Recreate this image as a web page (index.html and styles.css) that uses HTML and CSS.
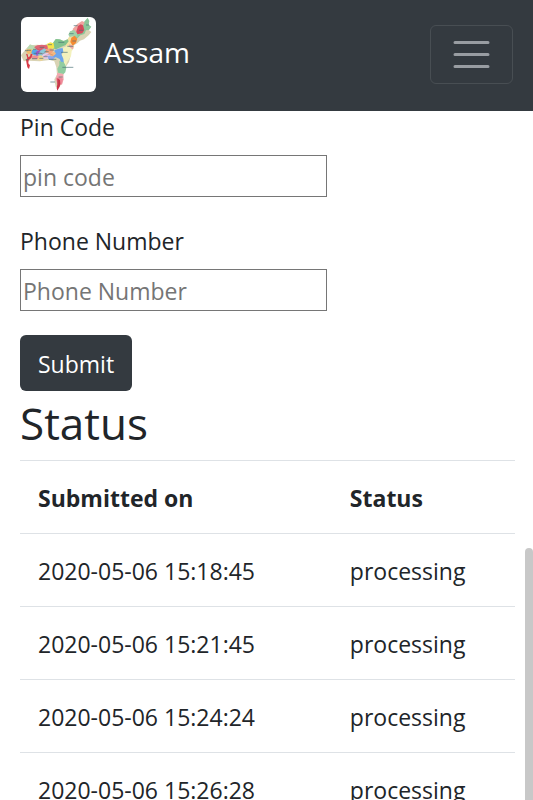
FILE: index.html
```html
<!DOCTYPE html>
<html lang="en">
<head>
<meta charset="utf-8">
<meta name="viewport" content="width=device-width, initial-scale=1">
<title>Assam</title>
<link rel="stylesheet" href="styles.css">
</head>
<body>
<header class="navbar">
  <a class="brand" href="#">
    <svg class="logo" viewBox="33 27 225 225" aria-hidden="true">
      <rect x="33" y="27" width="225" height="225" fill="#fff"/>
      <path fill="#d9d3b4" d="M48 122l12-10 22-2 18 2 12-5 18 1 10-14 24 5 12-8 10-22 8-9 18-6 20-14 6 12-2 14 8 6-8 10-14 12-12 4-8 8-8 4-14 14-3 12 4 10-4 16-12 18-6 24-2 22-12 14-8-4-4-22 8-14-2-22-6-18-14-4-30 4-32-2-16 2-8-18z"/>
      <path fill="#8cc79a" d="M233 29l5 10-2 11 8 6-7 10-9 1-5 11-12 4-8 8-10 4-3-8 17-16 8-20 10-12z"/>
      <path fill="#efa6a0" d="M190 61l12-13 14-9 8 4-6 13-11 20-12-2-8-6z"/>
      <path fill="#d94a5c" d="M204 54l8-5 7 3 4 14-6 10-15 3-4-5z"/>
      <path fill="#9fd0a8" d="M180 70l12-4 9 9 2 13-9-3-14 3-5-8z"/>
      <path fill="#f5e1a0" d="M176 88l12-3-2 25 7 5-7 13-10-5-12 4 4-16z"/>
      <path fill="#f58a32" d="M184 89l10-6 8 9-4 13-10 8-7-11z"/>
      <path fill="#efaaa5" d="M178 109l10 3 3 9-8 5-8-7z"/>
      <path fill="#f3f1bd" d="M154 121l20-8 12 10-3 22-12 18-6 16-9-9-5-22 7-12z"/>
      <path fill="#81c28e" d="M128 106l9-13 13 1 10 5 13-5 3 6-9 11-16 7-13 6-12-4z"/>
      <path fill="#f6e449" d="M111 108l10-5 10 3 2 14-14 4-9-7z"/>
      <path fill="#df6474" d="M82 112l13-2 17 2 2 10-13 4-9 4-14-5-6-8z"/>
      <path fill="#b8d9b1" d="M52 119l8-10 12 5 6 9-7 6-9 5-12 1z"/>
      <path fill="#f3bc6c" d="M46 126l13-4 10 4 1 9-17 3z"/>
      <path fill="#57a8e8" d="M66 127l13-3 5 5-4 14-9-2-7-5z"/>
      <path fill="#9a58cc" d="M81 128l16-2 4 8-8 9-13 1-4-8z"/>
      <path fill="#8bc8d8" d="M91 128l12-7 8 6-6 13-12 6-10-5z"/>
      <path fill="#f6a37d" d="M109 123l14-2 8 5-6 12-13 1-6-8z"/>
      <path fill="#e7c9e8" d="M100 138l13-4 8 8-8 11-13-1-5-7z"/>
      <path fill="#f4d38a" d="M82 143l12-1 7 7-5 9-12-2-5-6z"/>
      <path fill="#ef8f92" d="M63 145l11-3 12 4-3 7-15 1z"/>
      <path fill="#8fa9ea" d="M113 144l15-3 8 7-9 9-12-3z"/>
      <path fill="#6ca5ec" d="M133 127l12-5 13-2 2 11-6 7 6 14 2 15-8-1-5-13-11-5-10-1 7-9z"/>
      <path fill="#f4b67c" d="M121 136l13-5 4 6-9 8-8-1z"/>
      <path fill="#91cca0" d="M148 158l7 4 5-1 5 8 4 10-3 14-5 5-16-3-3-13 6-11z"/>
      <path fill="#f2a8af" d="M142 195l18 3 1 16-5 16-13-1-6-14z"/>
      <path fill="#ef8999" d="M138 210l13-2 8 5-4 15-11 2z"/>
      <path fill="#cc3548" d="M142 211l8 5 1 12-2 8-7 12-2-8 2-11z"/>
      <path fill="#d93c48" d="M48 137l5 2 2 9 5-3 2-8 6 1-4 12-8 7-1 9 5 6-3 11-5-5-2-11-2-11 4-6z"/>
      <path fill="none" stroke="#496f76" stroke-width="2" d="M191 53h12M207 67h13M228 51h9M178 77h13M187 99h11M145 103h18M114 110h12M89 118h14M51 127h12M45 128h8M71 136h11M84 137h13M104 131h12M119 126h13M66 152h15M88 151h12M117 154h22M153 133h20M47 155h9M157 178h33M121 222h14M146 207h12M172 115h18M69 124h9M100 146h13"/>
      <path fill="none" stroke="#ad5557" stroke-width="1" d="M212 52l3 12-9 6M72 118l17 8 12-9M83 131l16 7 13-12M103 144l17-6 10 4M146 212l-2 24"/>
    </svg>
    <span class="brand-name">Assam</span>
  </a>
  <button class="toggler" type="button" aria-label="Toggle navigation">
    <svg class="toggler-icon" viewBox="0 0 30 30" aria-hidden="true">
      <path stroke="#999da2" stroke-width="2" stroke-linecap="round" stroke-miterlimit="10" d="M4 7h22M4 15h22M4 23h22"/>
    </svg>
  </button>
</header>
<main class="content">
  <form class="form">
    <div class="field">
      <label for="pin">Pin Code</label>
      <input id="pin" type="text" placeholder="pin code">
    </div>
    <div class="field">
      <label for="phone">Phone Number</label>
      <input id="phone" type="tel" placeholder="Phone Number">
    </div>
    <button class="submit" type="submit">Submit</button>
  </form>
  <h1 class="title">Status</h1>
  <table class="table">
    <thead>
      <tr><th scope="col">Submitted on</th><th scope="col">Status</th></tr>
    </thead>
    <tbody>
      <tr><td>2020-05-06 15:18:45</td><td>processing</td></tr>
      <tr><td>2020-05-06 15:21:45</td><td>processing</td></tr>
      <tr><td>2020-05-06 15:24:24</td><td>processing</td></tr>
      <tr><td>2020-05-06 15:26:28</td><td>processing</td></tr>
    </tbody>
  </table>
</main>
<div class="scroll-thumb"></div>
</body>
</html>
```
FILE: styles.css
```css
* {
  box-sizing: border-box;
}

body {
  margin: 0;
  height: 100vh;
  overflow: hidden;
  background: #fff;
  color: #212529;
  font-family: "Open Sans", "Noto Sans", sans-serif;
  font-size: 23px;
  line-height: 36px;
}

.navbar {
  display: flex;
  align-items: center;
  justify-content: space-between;
  padding: 17px 20px 19px 21px;
  background: #343a40;
}

.brand {
  display: flex;
  align-items: center;
  gap: 8px;
  color: #fff;
  font-size: 28px;
  text-decoration: none;
}

.brand-name {
  padding-bottom: 6px;
}

.logo {
  width: 75px;
  height: 75px;
  border-radius: 6px;
}

.toggler {
  display: flex;
  align-items: center;
  padding: 6px 18px;
  border: 1px solid #484e53;
  border-radius: 6px;
  background: transparent;
}

.toggler-icon {
  width: 45px;
  height: 45px;
}

.content {
  padding: 0 18px 0 20px;
}

.field {
  display: flex;
  flex-direction: column;
  align-items: flex-start;
  gap: 12px;
}

.field + .field {
  margin-top: 28px;
}

.field label {
  line-height: 32px;
}

.field input {
  width: 307px;
  max-width: 100%;
  height: 42px;
  padding: 4px 2px 2px;
  border: 1px solid #767676;
  border-radius: 0;
  background: #fff;
  color: inherit;
  font: inherit;
}

.field input::placeholder {
  color: #757575;
}

.submit {
  display: block;
  margin-top: 24px;
  padding: 11px 18px 9px;
  border: 0;
  border-radius: 6px;
  background: #343a40;
  color: #fff;
  font: inherit;
}

.title {
  margin: 4px 0 8px;
  font-size: 44px;
  font-weight: 400;
  line-height: 57px;
}

.table {
  width: 100%;
  border-collapse: collapse;
}

.table th,
.table td {
  padding: 19px 18px 17px;
  border-top: 1px solid #dee2e6;
  text-align: left;
  white-space: nowrap;
}

.table th:first-child {
  width: 63%;
}

.scroll-thumb {
  position: fixed;
  top: 548px;
  right: 0;
  bottom: 0;
  width: 8px;
  border-radius: 4px 4px 0 0;
  background: #c8c8c8;
}
```
